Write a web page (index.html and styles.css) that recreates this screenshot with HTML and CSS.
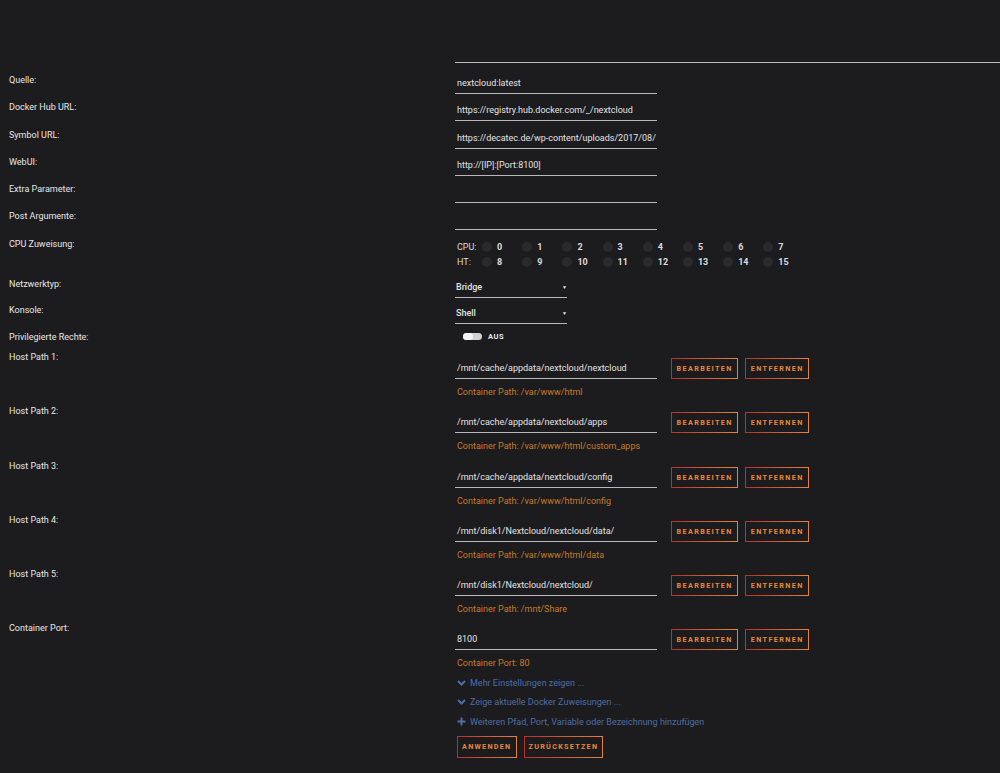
FILE: index.html
```html
<!DOCTYPE html>
<html lang="de">
<head>
    <meta charset="UTF-8">
    <title>Docker Container bearbeiten</title>
    <link rel="stylesheet" href="styles.css">
</head>
<body>
    <div class="form">
        <div class="divider"></div>

        <!-- Basic settings -->
        <div class="row text-row">
            <div class="label">Quelle:</div>
            <div class="field"><div class="input">nextcloud:latest</div></div>
        </div>
        <div class="row text-row">
            <div class="label">Docker Hub URL:</div>
            <div class="field"><div class="input">https://registry.hub.docker.com/_/nextcloud</div></div>
        </div>
        <div class="row text-row">
            <div class="label">Symbol URL:</div>
            <div class="field"><div class="input">https://decatec.de/wp-content/uploads/2017/08/</div></div>
        </div>
        <div class="row text-row">
            <div class="label">WebUI:</div>
            <div class="field"><div class="input">http://[IP]:[Port:8100]</div></div>
        </div>
        <div class="row text-row">
            <div class="label">Extra Parameter:</div>
            <div class="field"><div class="input"></div></div>
        </div>
        <div class="row text-row">
            <div class="label">Post Argumente:</div>
            <div class="field"><div class="input"></div></div>
        </div>

        <!-- CPU pinning -->
        <div class="row cpu-row">
            <div class="label">CPU Zuweisung:</div>
            <div class="field">
                <div class="cpu-line">
                    <span class="cpu-name">CPU:</span>
                    <span class="cpu"><i></i>0</span><span class="cpu"><i></i>1</span>
                    <span class="cpu"><i></i>2</span><span class="cpu"><i></i>3</span>
                    <span class="cpu"><i></i>4</span><span class="cpu"><i></i>5</span>
                    <span class="cpu"><i></i>6</span><span class="cpu"><i></i>7</span>
                </div>
                <div class="cpu-line">
                    <span class="cpu-name">HT:</span>
                    <span class="cpu"><i></i>8</span><span class="cpu"><i></i>9</span>
                    <span class="cpu"><i></i>10</span><span class="cpu"><i></i>11</span>
                    <span class="cpu"><i></i>12</span><span class="cpu"><i></i>13</span>
                    <span class="cpu"><i></i>14</span><span class="cpu"><i></i>15</span>
                </div>
            </div>
        </div>

        <div class="row select-row">
            <div class="label">Netzwerktyp:</div>
            <div class="field"><div class="select">Bridge<span class="arrow">&#9660;</span></div></div>
        </div>
        <div class="row select-row">
            <div class="label">Konsole:</div>
            <div class="field"><div class="select">Shell<span class="arrow">&#9660;</span></div></div>
        </div>
        <div class="row switch-row">
            <div class="label">Privilegierte Rechte:</div>
            <div class="field switch-field"><span class="switch"></span><span class="switch-text">AUS</span></div>
        </div>

        <!-- Paths and ports -->
        <div class="row path-row">
            <div class="label">Host Path 1:</div>
            <div class="field">
                <div class="path-line">
                    <div class="input">/mnt/cache/appdata/nextcloud/nextcloud</div>
                    <button class="btn">Bearbeiten</button>
                    <button class="btn">Entfernen</button>
                </div>
                <div class="hint">Container Path: /var/www/html</div>
            </div>
        </div>
        <div class="row path-row">
            <div class="label">Host Path 2:</div>
            <div class="field">
                <div class="path-line">
                    <div class="input">/mnt/cache/appdata/nextcloud/apps</div>
                    <button class="btn">Bearbeiten</button>
                    <button class="btn">Entfernen</button>
                </div>
                <div class="hint">Container Path: /var/www/html/custom_apps</div>
            </div>
        </div>
        <div class="row path-row">
            <div class="label">Host Path 3:</div>
            <div class="field">
                <div class="path-line">
                    <div class="input">/mnt/cache/appdata/nextcloud/config</div>
                    <button class="btn">Bearbeiten</button>
                    <button class="btn">Entfernen</button>
                </div>
                <div class="hint">Container Path: /var/www/html/config</div>
            </div>
        </div>
        <div class="row path-row">
            <div class="label">Host Path 4:</div>
            <div class="field">
                <div class="path-line">
                    <div class="input">/mnt/disk1/Nextcloud/nextcloud/data/</div>
                    <button class="btn">Bearbeiten</button>
                    <button class="btn">Entfernen</button>
                </div>
                <div class="hint">Container Path: /var/www/html/data</div>
            </div>
        </div>
        <div class="row path-row">
            <div class="label">Host Path 5:</div>
            <div class="field">
                <div class="path-line">
                    <div class="input">/mnt/disk1/Nextcloud/nextcloud/</div>
                    <button class="btn">Bearbeiten</button>
                    <button class="btn">Entfernen</button>
                </div>
                <div class="hint">Container Path: /mnt/Share</div>
            </div>
        </div>
        <div class="row path-row">
            <div class="label">Container Port:</div>
            <div class="field">
                <div class="path-line">
                    <div class="input">8100</div>
                    <button class="btn">Bearbeiten</button>
                    <button class="btn">Entfernen</button>
                </div>
                <div class="hint">Container Port: 80</div>

                <div class="links">
                    <a class="link">
                        <svg width="9" height="6" viewBox="0 0 9 6"><path d="M1 1l3.5 3.5L8 1" fill="none" stroke="#4d6fa8" stroke-width="2"/></svg>
                        Mehr Einstellungen zeigen ...
                    </a>
                    <a class="link">
                        <svg width="9" height="6" viewBox="0 0 9 6"><path d="M1 1l3.5 3.5L8 1" fill="none" stroke="#4d6fa8" stroke-width="2"/></svg>
                        Zeige aktuelle Docker Zuweisungen ...
                    </a>
                    <a class="link">
                        <svg width="9" height="9" viewBox="0 0 9 9"><path d="M4.5 0.5v8M0.5 4.5h8" fill="none" stroke="#4d6fa8" stroke-width="2"/></svg>
                        Weiteren Pfad, Port, Variable oder Bezeichnung hinzufügen
                    </a>
                </div>

                <div class="actions">
                    <button class="btn">Anwenden</button>
                    <button class="btn">Zurücksetzen</button>
                </div>
            </div>
        </div>
    </div>
</body>
</html>
```

FILE: styles.css
```css
body {
    margin: 0;
    background-color: #1c1b1d;
    color: #e4e4e4;
    font-family: Roboto, 'Liberation Sans', sans-serif;
    font-size: 9px;
}

.form {
    padding: 62px 0 0 9px;
}

.divider {
    height: 1px;
    margin-left: 446px;
    margin-bottom: 10px;
    background-color: #bdbdbd;
}

.row {
    display: grid;
    grid-template-columns: 446px 1fr;
    align-items: start;
}

.label {
    line-height: 14px;
    color: #e8e8e8;
}

.text-row {
    height: 27.3px;
}

.input {
    width: 200px;
    height: 20px;
    line-height: 20px;
    padding-left: 2px;
    border-bottom: 1px solid #b8b8b8;
    color: #e4e4e4;
    white-space: nowrap;
    overflow: hidden;
}

/* CPU pinning grid */
.cpu-row {
    height: 40.2px;
}

.cpu-line {
    display: flex;
    align-items: center;
    height: 15px;
    padding-left: 2px;
}

.cpu-line:first-child {
    margin-top: 3px;
}

.cpu-name {
    width: 25px;
    color: #dcdcdc;
}

.cpu {
    display: flex;
    align-items: center;
    width: 40.2px;
    font-weight: bold;
    color: #dcdcdc;
}

.cpu i {
    width: 10px;
    height: 10px;
    margin-right: 5px;
    border-radius: 50%;
    background-color: #2a292b;
}

/* Dropdowns */
.select-row {
    height: 26.5px;
}

.select {
    position: relative;
    width: 111px;
    height: 20px;
    line-height: 20px;
    padding-left: 1px;
    border-bottom: 1px solid #b8b8b8;
    font-weight: 500;
    color: #e2e2e2;
}

.arrow {
    position: absolute;
    right: 0;
    top: 0;
    font-size: 5px;
    color: #e8e8e8;
}

/* Toggle */
.switch-row {
    height: 20px;
}

.switch-field {
    display: flex;
    align-items: center;
    height: 14px;
    padding-left: 8px;
}

.switch {
    position: relative;
    width: 19px;
    height: 7px;
    border-radius: 4px;
    background-color: #d2d2d2;
}

.switch::before {
    content: '';
    position: absolute;
    left: 0;
    top: 0;
    width: 10px;
    height: 7px;
    border-radius: 4px;
    background-color: #f4f4f4;
}

.switch-text {
    margin-left: 6px;
    font-size: 7.5px;
    font-weight: bold;
    letter-spacing: 0.5px;
    color: #e8e8e8;
}

/* Path and port rows */
.path-line {
    display: flex;
    align-items: center;
    margin-top: 8px;
}

.path-line .input {
    margin-right: 14px;
}

.btn {
    height: 21px;
    margin: 0 7px 0 0;
    padding: 0 4.5px;
    border: 1px solid;
    border-image: linear-gradient(90deg, #b9302d, #e0853f) 1;
    background: transparent;
    color: #e8893a;
    font-family: Roboto, 'Liberation Sans', sans-serif;
    font-size: 7.2px;
    font-weight: bold;
    letter-spacing: 1.4px;
    text-transform: uppercase;
    cursor: pointer;
}

.hint {
    margin: 6px 0 5.3px;
    padding-left: 2px;
    line-height: 14px;
    color: #c57d2c;
}

.links {
    margin-top: 1px;
}

.link {
    display: flex;
    align-items: center;
    height: 14px;
    margin-bottom: 5.5px;
    padding-left: 2px;
    color: #4d6fa8;
    cursor: pointer;
}

.link svg {
    width: 9px;
    margin-right: 4px;
}

.actions {
    display: flex;
    margin-top: 7px;
    padding-left: 2px;
}

.actions .btn {
    height: 22px;
    padding: 0 4px;
    letter-spacing: 1.3px;
}
```
